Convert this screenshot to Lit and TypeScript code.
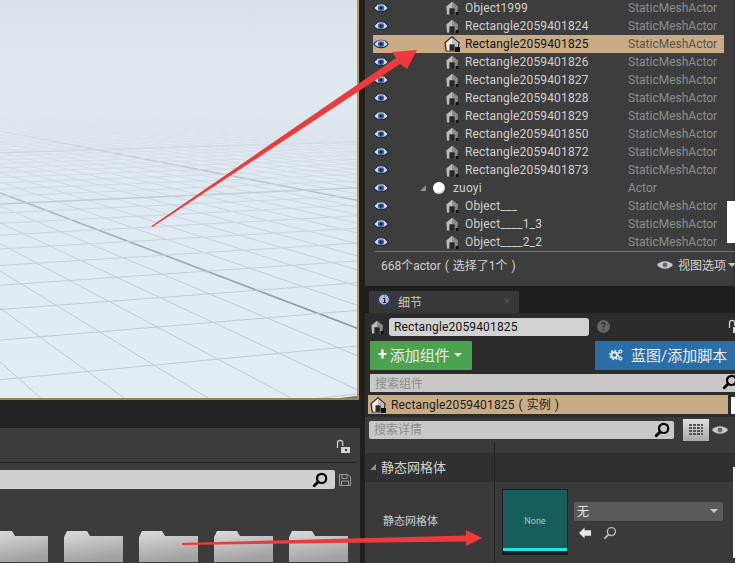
import { LitElement, html, css, svg } from "lit";
import { customElement } from "lit/decorators.js";

type Row = { name: string; type: string; selected?: boolean; folder?: boolean };

const ROWS: Row[] = [
  { name: "Object1999", type: "StaticMeshActor" },
  { name: "Rectangle2059401824", type: "StaticMeshActor" },
  { name: "Rectangle2059401825", type: "StaticMeshActor", selected: true },
  { name: "Rectangle2059401826", type: "StaticMeshActor" },
  { name: "Rectangle2059401827", type: "StaticMeshActor" },
  { name: "Rectangle2059401828", type: "StaticMeshActor" },
  { name: "Rectangle2059401829", type: "StaticMeshActor" },
  { name: "Rectangle2059401850", type: "StaticMeshActor" },
  { name: "Rectangle2059401872", type: "StaticMeshActor" },
  { name: "Rectangle2059401873", type: "StaticMeshActor" },
  { name: "zuoyi", type: "Actor", folder: true },
  { name: "Object___", type: "StaticMeshActor" },
  { name: "Object____1_3", type: "StaticMeshActor" },
  { name: "Object____2_2", type: "StaticMeshActor" },
];

const eye = () => html`<svg class="eye" viewBox="0 0 16 12" width="16" height="12">
  <path d="M0.8 6C4 1.2 12 1.2 15.2 6 12 10.8 4 10.8 0.8 6Z" fill="#d5deee" stroke="#1f2b4a" stroke-width="1.2"/>
  <circle cx="8" cy="6" r="3.2" fill="#4a6aa8"/><circle cx="8" cy="6" r="1.5" fill="#141d38"/>
  <path d="M4 3.6C6 2.6 10 2.6 12 3.6" stroke="#fff" stroke-width="0.8" fill="none"/>
</svg>`;

const house = (sel = false) => html`<svg viewBox="0 0 16 16" width="16" height="16">
  ${sel ? svg`<path d="M8 0.8 15 6.8 13.8 15H2.2L1 6.8Z" fill="none" stroke="#2a2a2a" stroke-width="1.2"/>` : ""}
  <path d="M8 1.8 13.6 6.6 13 14.5H10.6V8.4H5.6V14.5H3L2.4 6.6Z" fill="${sel ? "#ececec" : "#bdbdbd"}"/>
  <path d="M8 1.8 13.6 6.6 13 14.5H10.6V8.4H8Z" fill="${sel ? "#bcbcbc" : "#8c8c8c"}"/>
  <path d="M5.6 8.4H10.6V14.5H5.6Z" fill="#262626"/>
  <rect x="${sel ? 11 : 11.5}" y="${sel ? 11 : 12}" width="${sel ? 5 : 3}" height="${sel ? 5 : 3}" fill="#111"/>
</svg>`;

const glass = (color = "#000", w = 2.2) => html`<svg class="glass" viewBox="0 0 16 16" width="16" height="16">
  <circle cx="9.6" cy="6.4" r="4.6" fill="none" stroke="${color}" stroke-width="${w}"/>
  <path d="M6.2 9.8 2.2 13.8" stroke="${color}" stroke-width="${w + 0.6}" stroke-linecap="round"/>
</svg>`;

const lock = () => html`<svg viewBox="0 0 16 16" width="16" height="16">
  <path d="M2.5 9V4a2.6 2.6 0 0 1 5.2 0v3" fill="none" stroke="#d2d2d2" stroke-width="1.2"/>
  <rect x="6" y="8" width="9" height="6" fill="#d2d2d2"/><rect x="10" y="10" width="2" height="2" fill="#333"/>
</svg>`;

/* The floor grid: two fans of lines running to vanishing points. */
function grid() {
  const vaX = -335, vaY = 66, vbX = 3600, vbY = 40, w = 358, h = 400;
  const lines: unknown[] = [];
  for (let n = -8; n < 60; n++) {
    const ix = 43 + n * 84;
    const major = n === 6 || n === 16;
    if (ix <= vaX) continue;
    const t = (h - vaY) / (ix - vaX);
    const yEnd = vaY + t * (w - vaX);
    const y0 = vaY + t * (0 - vaX);
    lines.push(svg`<line x1="0" y1="${y0}" x2="${w}" y2="${yEnd}" stroke="${major ? "#8f979e" : "#c2cad1"}" stroke-width="${major ? 1.6 : 1}"/>`);
  }
  for (let n = -1; n < 50; n++) {
    const y0 = 72 + 1 / (0.00325 + 0.00048 * n);
    const major = n === 9 || n === 19;
    const y1 = y0 + ((vbY - y0) * w) / vbX;
    lines.push(svg`<line x1="0" y1="${y0}" x2="${w}" y2="${y1}" stroke="${major ? "#a9b2ba" : "#c2cad1"}" stroke-width="${major ? 1.5 : 1}"/>`);
  }
  return svg`${lines}`;
}

@customElement("app-root")
export class AppRoot extends LitElement {
  static styles = css`
    :host { display: block; width: 735px; height: 563px; overflow: hidden; position: relative; background: #1f1f1f;
      font-family: Roboto, "Noto Sans CJK SC", sans-serif; font-size: 12px; color: #c8c8c8; }
    svg { display: block; flex: none; }
    .par { display: inline-block; width: 12px; text-align: center; letter-spacing: 0; }
    .page { display: flex; width: 735px; height: 563px; }
    .left { width: 360px; flex: none; display: flex; flex-direction: column; margin-right: 5px; }
    .viewport { width: 359px; height: 400px; flex: none; box-sizing: border-box; border-right: 2px solid #b49a55; border-bottom: 2px solid #9c8648; }
    .strip { height: 28px; flex: none; background: #222; }
    .browser { flex: 1; background: #3c3c3c; display: flex; flex-direction: column; min-height: 0; }
    .lockrow { height: 35px; flex: none; display: flex; justify-content: flex-end; align-items: center; padding: 4px 7px 0 0; box-sizing: border-box; border-bottom: 1px solid #222; margin-right: 2px; }
    .searchrow { display: flex; align-items: center; margin-top: 7px; height: 19px; flex: none; }
    .bigsearch { width: 335px; height: 19px; background: #cfcfcf; border-radius: 0 2px 2px 0; display: flex; justify-content: flex-end; align-items: center; padding-right: 7px; box-sizing: border-box; }
    .save { margin-left: 2px; }
    .folders { display: flex; gap: 16px; margin: 42px 0 0 -11px; }
    .folder { width: 59px; flex: none; height: 31px; }

    .right { flex: none; width: 370px; display: flex; flex-direction: column; min-width: 0; }
    .outliner { height: 286px; flex: none; background: #3d3d3d; box-sizing: border-box; padding-left: 8px; overflow: hidden; box-shadow: inset -2px 0 0 #353535; }
    .rows { margin-top: -1px; width: 351px; }
    .row { height: 18px; display: grid; grid-template-columns: 255px 96px; align-items: center; color: #d0d0d0; }
    .row.sel { background: #c9ab86; color: #111; }
    .name { display: flex; align-items: center; white-space: nowrap; }
    .name .eye { margin-right: 55px; }
    .name.group .eye { margin-right: 31px; }
    .tw { width: 0; height: 0; border-style: solid; border-width: 0 0 6px 6px; border-color: transparent transparent #8f8f8f transparent; margin-right: 7px; }
    .ball { width: 12px; height: 12px; border-radius: 50%; background: radial-gradient(circle at 40% 35%, #fff 50%, #999); margin-right: 8px; }
    .label { margin-left: 5px; letter-spacing: 0.16px; }
    .name.group .label { margin-left: 0; }
    .type { color: #8e8e8e; white-space: nowrap; }
    .row.sel .type { color: #58524a; }
    .foot { margin: 0 -1px 0 2px; border-top: 1px solid #777; height: 32px; display: flex; align-items: center; justify-content: space-between; padding: 0 0 6px 6px; box-sizing: border-box; color: #d2d2d2; white-space: nowrap; }
    .view { display: flex; align-items: center; gap: 5px; }
    .eye2 { width: 16px; height: 10px; }
    .tri { width: 0; height: 0; border-style: solid; border-width: 4px 4px 0 4px; border-color: #c8c8c8 transparent transparent transparent; }
    .view .tri { margin-left: -3px; }

    .tabs { height: 27px; flex: none; display: flex; align-items: flex-end; padding-left: 4px; }
    .tab { width: 150px; height: 22px; background: #383838; display: flex; align-items: center; padding: 0 0 2px 8px; box-sizing: border-box; gap: 5px; position: relative; }
    .tab .x { position: absolute; right: 9px; color: #4f4f4f; font-size: 12px; }
    .details { flex: 1; background: #2c2c2c; display: flex; flex-direction: column; min-height: 0; }
    .namerow { height: 27px; flex: none; display: flex; align-items: center; padding: 0 0 0 4px; box-sizing: border-box; }
    .nameinput { width: 200px; height: 18px; margin-left: 4px; background: #d2d2d2; color: #111; border-radius: 3px; padding-left: 5px; box-sizing: border-box; line-height: 18px; letter-spacing: 0.16px; }
    .help { width: 13px; height: 13px; border-radius: 50%; background: #666; color: #2e2e2e; font-size: 10px; font-weight: 700; text-align: center; line-height: 13px; margin-left: 8px; }
    .lockr { margin-left: auto; margin-right: -8px; }
    .buttons { height: 29px; flex: none; display: flex; margin-top: 1px; padding-left: 5px; }
    .add { width: 102px; flex: none; background: #4ca24f; color: #eee; font-size: 15px; display: flex; align-items: center; padding: 0 0 2px 8px; box-sizing: border-box; gap: 3px; border-radius: 1px; }
    .add b { font-size: 16px; color: #fff; }
    .add .tri { border-color: #eee transparent transparent transparent; margin-left: 1px; }
    .bp { width: 140px; flex: none; margin-left: 123px; background: #2a6ea8; color: #eee; font-size: 15px; display: flex; align-items: center; padding: 0 0 2px 14px; box-sizing: border-box; gap: 8px; white-space: nowrap; }
    .compsearch { height: 18px; flex: none; margin: 4px 0 0 5px; background: #c8c8c8; color: #8d8d8d; display: flex; align-items: center; padding: 0 0 2px 5px; box-sizing: border-box; justify-content: space-between; }
    .compsearch .glass { margin-right: -3px; }
    .comp { height: 19px; flex: none; margin: 3px 0 0 3px; width: 360px; background: #c9ab86; color: #1d1a16; display: flex; align-items: center; gap: 5px; padding: 0 0 0 2px; box-sizing: border-box; white-space: nowrap; }
    .comp > span { letter-spacing: 0.16px; margin-top: -2px; }
    .detsearch { height: 25px; flex: none; margin-top: 3px; display: flex; align-items: center; padding-left: 4px; background: #3a3a3a; box-sizing: border-box; }
    .dsbox { width: 305px; height: 18px; background: #c8c8c8; color: #8d8d8d; border-radius: 2px; display: flex; align-items: center; justify-content: space-between; padding: 0 4px 2px 5px; box-sizing: border-box; }
    .dsbox .glass { margin-top: 2px; }
    .gridbtn { width: 26px; height: 22px; margin-left: 9px; background: linear-gradient(#e0e0e0, #a8a8a8); display: flex; align-items: center; justify-content: center; }
    .dseye { margin-left: 3px; }
    .propgrid { flex: 1; background: #3a3a3a; display: grid; grid-template-columns: 130px 1fr; grid-template-rows: 11px 29px 1fr; position: relative; }
    .spacer { border-right: 1px solid #232323; }
    .head { background: #303030; border-right: 1px solid #232323; display: flex; align-items: center; padding: 0 0 2px 5px; font-size: 13px; color: #d4d4d4; gap: 5px; }
    .headr { background: #303030; }
    .lab { border-right: 1px solid #232323; font-size: 11px; color: #cfcfcf; padding: 30px 0 0 18px; }
    .val { display: flex; padding: 7px 0 0 7px; gap: 6px; align-items: flex-start; }
    .thumb { width: 66px; height: 66px; flex: none; background: #175d5c; color: #a8c8c6; font-size: 9px; display: flex; align-items: center; justify-content: center; box-sizing: border-box; border-style: solid; border-color: #1d1d1d; border-width: 1px 1px 4px; box-shadow: inset 0 -3px 0 #19e6e6; }
    .pick { margin-top: 13px; width: 149px; }
    .select { height: 19px; background: #5a5a5a; border-radius: 2px; display: flex; align-items: center; justify-content: space-between; padding: 0 5px 2px 3px; color: #e6e6e6; box-sizing: border-box; }
    .tools { display: flex; gap: 11px; align-items: center; padding: 5px 0 0 5px; }
    .tools .glass { width: 14px; height: 14px; }

    .scrap { position: absolute; background: #fff; }
    .s1 { left: 727px; top: 201px; width: 8px; height: 42px; }
    .s2 { left: 731px; top: 397px; width: 4px; height: 17px; }
    .s3 { left: 733px; top: 467px; width: 2px; height: 91px; }
    .arrows { position: absolute; left: 0; top: 0; pointer-events: none; }
  `;

  render() {
    return html`<div class="page">
      <div class="left">
        <div class="viewport">
          <svg width="357" height="398" viewBox="0 0 357 398">
            <defs>
              <linearGradient id="sky" x1="0" y1="0" x2="0" y2="1">
                <stop offset="0" stop-color="#dbe2ea"/><stop offset="0.22" stop-color="#e6ecf2"/>
                <stop offset="0.5" stop-color="#dfe9f1"/><stop offset="1" stop-color="#e2ecf4"/>
              </linearGradient>
              <linearGradient id="fade" gradientUnits="userSpaceOnUse" x1="0" y1="72" x2="0" y2="310">
                <stop offset="0" stop-color="#e1e9f0" stop-opacity="1"/><stop offset="0.14" stop-color="#e1e9f0" stop-opacity="1"/>
                <stop offset="0.33" stop-color="#e0e9f1" stop-opacity="0.72"/><stop offset="0.62" stop-color="#e0eaf2" stop-opacity="0.35"/>
                <stop offset="1" stop-color="#e0eaf2" stop-opacity="0"/>
              </linearGradient>
              <linearGradient id="top" x1="0" y1="0" x2="0" y2="1">
                <stop offset="0" stop-color="#d9e0e9"/><stop offset="1" stop-color="#e1e9f0"/>
              </linearGradient>
            </defs>
            <rect width="357" height="398" fill="url(#sky)"/>
            ${grid()}
            <rect y="72" width="357" height="238" fill="url(#fade)"/>
            <rect width="357" height="72" fill="url(#top)"/>
            <path d="M340 398 357 396V398Z" fill="#6f6f6f"/>
          </svg>
        </div>
        <div class="strip"></div>
        <div class="browser">
          <div class="lockrow">${lock()}</div>
          <div class="searchrow">
            <div class="bigsearch">${glass("#000")}</div>
            <svg class="save" viewBox="0 0 16 16" width="16" height="16"><path d="M2.5 2.5H11L13.5 5V13.5H2.5Z M5 2.5V6.5H10V2.5 M4.5 13.5V9H11.5V13.5" fill="none" stroke="#9a9a9a" stroke-width="1"/></svg>
          </div>
          <div class="folders">
            ${[0, 1, 2, 3, 4].map(
              () => html`<svg class="folder" viewBox="0 0 59 31" width="59" height="31">
                <defs><linearGradient id="fg" x1="0" y1="0" x2="0.3" y2="1"><stop offset="0" stop-color="#dcdcdc"/><stop offset="1" stop-color="#a2a2a2"/></linearGradient></defs>
                <path d="M0 31V6L3 0H23L26 5H59V31Z" fill="url(#fg)"/>
              </svg>`
            )}
          </div>
        </div>
      </div>
      <div class="right">
        <div class="outliner">
          <div class="rows">
            ${ROWS.map(
              (r) => html`<div class="row ${r.selected ? "sel" : ""}">
                <div class="name ${r.folder ? "group" : ""}">
                  ${eye()}
                  ${r.folder ? html`<span class="tw"></span><span class="ball"></span>` : house(r.selected)}
                  <span class="label">${r.name}</span>
                </div>
                <div class="type">${r.type}</div>
              </div>`
            )}
          </div>
          <div class="foot">
            <span>668个actor<span class="par">(</span>选择了1个<span class="par">)</span></span>
            <span class="view">
              <svg class="eye2" viewBox="0 0 16 10"><path d="M0 5C4 0 12 0 16 5 12 10 4 10 0 5Z" fill="#c8c8c8"/><circle cx="8" cy="5" r="2.4" fill="#5e6a7a"/></svg>
              视图选项<span class="tri"></span>
            </span>
          </div>
        </div>
        <div class="tabs">
          <div class="tab">
            <svg viewBox="0 0 16 16" width="16" height="16"><circle cx="7" cy="6.5" r="5.6" fill="#aeb8d0" stroke="#27407c" stroke-width="1.4"/><path d="M11 10.5 15 14.5" stroke="#27407c" stroke-width="2"/><path d="M6 5.5H7.6V9.5M6 9.5H9M7 3H7.8" stroke="#222" stroke-width="1.2" fill="none"/></svg>
            <span>细节</span><span class="x">×</span>
          </div>
        </div>
        <div class="details">
          <div class="namerow">
            ${house()}
            <div class="nameinput">Rectangle2059401825</div>
            <div class="help">?</div>
            <div class="lockr">${lock()}</div>
          </div>
          <div class="buttons">
            <div class="add"><b>+</b>添加组件<span class="tri"></span></div>
            <div class="bp">
              <svg viewBox="0 0 16 16" width="14" height="14">
                <circle cx="6" cy="8" r="3.2" fill="none" stroke="#eee" stroke-width="2.2"/>
                <circle cx="6" cy="8" r="5" fill="none" stroke="#eee" stroke-width="1.8" stroke-dasharray="2 1.9"/>
                <circle cx="13" cy="4" r="1.7" fill="none" stroke="#eee" stroke-width="1.4"/>
                <circle cx="13" cy="12" r="1.7" fill="none" stroke="#eee" stroke-width="1.4"/>
              </svg>
              蓝图/添加脚本
            </div>
          </div>
          <div class="compsearch">搜索组件 ${glass("#000")}</div>
          <div class="comp">${house(true)}<span>Rectangle2059401825<span class="par">(</span>实例<span class="par">)</span></span></div>
          <div class="detsearch">
            <div class="dsbox">搜索详情 ${glass("#000")}</div>
            <div class="gridbtn">
              <svg viewBox="0 0 14 12" width="14" height="12"><path d="M0 1H14M0 4H14M0 7H14M0 10H14" stroke="#555" stroke-width="2" stroke-dasharray="3 1"/></svg>
            </div>
            <svg class="eye2 dseye" viewBox="0 0 16 10"><path d="M0 5C4 0 12 0 16 5 12 10 4 10 0 5Z" fill="#c8c8c8"/><circle cx="8" cy="5" r="2.4" fill="#5e6a7a"/></svg>
          </div>
          <div class="propgrid">
            <div class="spacer"></div><div></div>
            <div class="head"><span class="tw" style="margin:0"></span>静态网格体</div><div class="headr"></div>
            <div class="lab">静态网格体</div>
            <div class="val">
              <div class="thumb">None</div>
              <div class="pick">
                <div class="select">无<span class="tri"></span></div>
                <div class="tools">
                  <svg viewBox="0 0 14 12" width="13" height="12"><path d="M0 6 6 0V3H13V9H6V12Z" fill="#e8e8e8"/></svg>
                  ${glass("#bdbdbd", 1.6)}
                </div>
              </div>
            </div>
          </div>
        </div>
      </div>
    </div>
    <div class="scrap s1"></div><div class="scrap s2"></div><div class="scrap s3"></div>
    <svg class="arrows" width="735" height="563" viewBox="0 0 735 563">
      <path d="M151.5 226 396 58 392 52 417 50 407 69 400 64 152.5 227Z" fill="#ee3a3a"/>
      <path d="M182 543 466 535.5V530L482 538 466 546V541.5L182 545Z" fill="#ee3a3a"/>
    </svg>`;
  }
}
